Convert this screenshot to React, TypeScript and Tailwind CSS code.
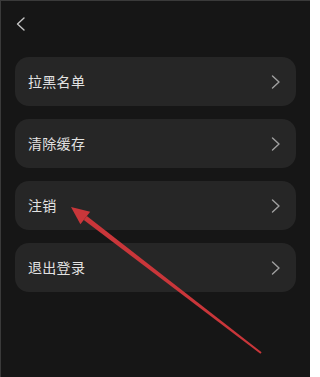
const items = ["拉黑名单", "清除缓存", "注销", "退出登录"];

function Chevron({ dir, className }: { dir: "left" | "right"; className?: string }) {
  return (
    <svg width="10" height="14" viewBox="0 0 10 14" fill="none" className={className}>
      <polyline
        points={dir === "right" ? "1.5,1 8,7 1.5,13" : "8,1 1.5,7 8,13"}
        stroke="currentColor"
        strokeWidth="1.4"
        strokeLinecap="round"
        strokeLinejoin="round"
      />
    </svg>
  );
}

export default function App() {
  return (
    <main
      className="relative h-[377px] w-[310px] overflow-hidden border-t border-l border-[#3a3a3a] bg-[#161616]"
      style={{ fontFamily: '"Noto Sans CJK SC", "Noto Sans", sans-serif' }}
    >
      <div className="flex h-[56px] items-start pl-[15px] pt-[16px]">
        <Chevron dir="left" className="text-[#c4c4c4]" />
      </div>

      <div className="flex flex-col gap-[13px] px-[14px]">
        {items.map((label) => (
          <div
            key={label}
            className="flex h-[49px] items-center justify-between rounded-[14px] bg-[#262626] pl-[13px] pr-[15px]"
          >
            <span className="text-[14px] tracking-[0.3px] text-[#e2e2e2]">{label}</span>
            <Chevron dir="right" className="text-[#a0a0a0]" />
          </div>
        ))}
      </div>

      {/* red annotation arrow */}
      <svg className="pointer-events-none absolute left-0 top-0" width="310" height="377">
        <polygon points="85.8,215 82.8,219 259.4,352.8 260.6,351.2" fill="#c9363a" />
        <polygon points="70,206 89.2,210.7 79.4,223.3" fill="#c9363a" />
      </svg>
    </main>
  );
}
